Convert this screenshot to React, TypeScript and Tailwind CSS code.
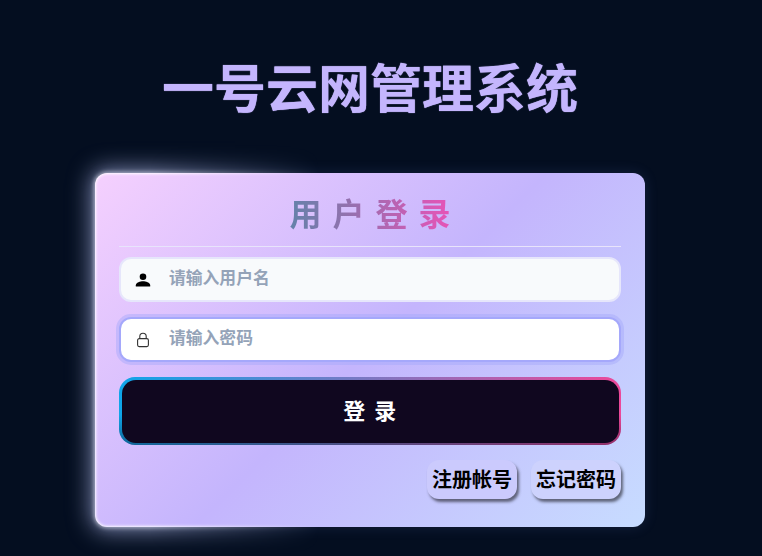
import { useState } from 'react';

function UserIcon() {
  return (
    <svg width="16" height="16" viewBox="0 0 16 16" fill="#000">
      <circle cx="8" cy="4.8" r="3.3" />
      <path d="M0.8 14.5v-1.3c0-2.6 4.6-4 7.2-4s7.2 1.4 7.2 4v1.3z" />
    </svg>
  );
}

function LockIcon() {
  return (
    <svg width="14" height="16" viewBox="0 0 14 16" fill="none" stroke="#333" strokeWidth="1.1">
      <rect x="1.6" y="6.6" width="10.8" height="8" rx="1.6" />
      <path d="M3.8 6.6V4.4a3.2 3.2 0 0 1 6.4 0v2.2" />
    </svg>
  );
}

export default function App() {
  const [username, setUsername] = useState('');
  const [password, setPassword] = useState('');

  return (
    <div className="h-[556px] w-[762px] overflow-hidden bg-[#040e20] font-['Liberation_Sans','Noto_Sans_CJK_SC',sans-serif]">
      <div className="w-[740px]">
        <h1 className="pt-[58px] text-center text-[52px] font-bold leading-[64px] text-[#c4b5fd] [text-shadow:0_0_1px_#c4b5fd]">
          一号云网管理系统
        </h1>

        <div className="relative mx-auto mt-[51px] h-[354px] w-[550px]">
          <div className="relative h-full rounded-[12px] bg-[linear-gradient(135deg,#f5d0fe_0%,#c4b5fd_50%,#c7dcff_100%)] px-6 pt-[18px] shadow-[0_0_14px_rgba(110,130,220,0.16)]">
            <div className="border-b border-[#e8e4fb] pb-[7px] text-center">
              <span className="bg-[linear-gradient(90deg,#5a85a8,#f050b8)] bg-clip-text pl-[11px] text-[32px] font-bold leading-[48px] tracking-[11px] text-transparent">
                用户登录
              </span>
            </div>

            <label className="mt-[10px] flex h-[45px] items-center rounded-[12px] border-2 border-[#e6e6fb] bg-[#f8fafc]">
              <span className="ml-[14px] flex w-4 justify-center"><UserIcon /></span>
              <input
                value={username}
                onChange={(e) => setUsername(e.target.value)}
                placeholder="请输入用户名"
                className="mb-[2px] ml-[18px] flex-1 bg-transparent text-[16.8px] font-bold outline-none placeholder:text-[#94a3b8]"
              />
            </label>

            <label className="mt-[15px] flex h-[45px] items-center rounded-[12px] border-2 border-[#a5a8fb] bg-white shadow-[0_0_0_3px_rgba(165,168,251,0.45)]">
              <span className="ml-[14px] flex w-4 justify-center"><LockIcon /></span>
              <input
                type="text"
                value={password}
                onChange={(e) => setPassword(e.target.value)}
                placeholder="请输入密码"
                className="mb-[2px] ml-[18px] flex-1 bg-transparent text-[16.8px] font-bold outline-none placeholder:text-[#94a3b8]"
              />
            </label>

            <div className="mt-[15px] h-[68px] rounded-[16px] bg-[linear-gradient(180deg,transparent_55%,rgba(15,8,32,0.4)),linear-gradient(90deg,#0ea5e9,#ec4899)] pb-[2px] pl-[3px] pr-[2px] pt-[3px]">
              <button className="block h-full w-full rounded-[14px] bg-[#10071f] text-[22px] font-bold tracking-[1.5px] text-white">
                登 录
              </button>
            </div>

            <div className="mt-[15px] flex justify-end gap-[14px]">
              <button className="h-[39px] w-[90px] rounded-[12px] bg-[#cbcafd] pt-[1px] text-[20px] font-bold text-black shadow-[2px_3px_3px_rgba(40,40,50,0.65)]">
                注册帐号
              </button>
              <button className="h-[39px] w-[90px] rounded-[12px] bg-[#cdd2fd] pt-[1px] text-[20px] font-bold text-black shadow-[2px_3px_3px_rgba(40,40,50,0.65)]">
                忘记密码
              </button>
            </div>
          </div>

          {/* 왼쪽 글로우 */}
          <div className="pointer-events-none absolute -inset-[40px] p-[40px] [mask-image:linear-gradient(90deg,#000_15%,transparent_42%)]">
            <div className="h-full w-full rounded-[12px] shadow-[0_0_22px_5px_rgba(200,208,255,0.55),0_0_4px_1px_rgba(255,255,255,0.6),inset_0_0_3px_1px_rgba(255,255,255,0.95)]" />
          </div>
        </div>
      </div>
    </div>
  );
}
